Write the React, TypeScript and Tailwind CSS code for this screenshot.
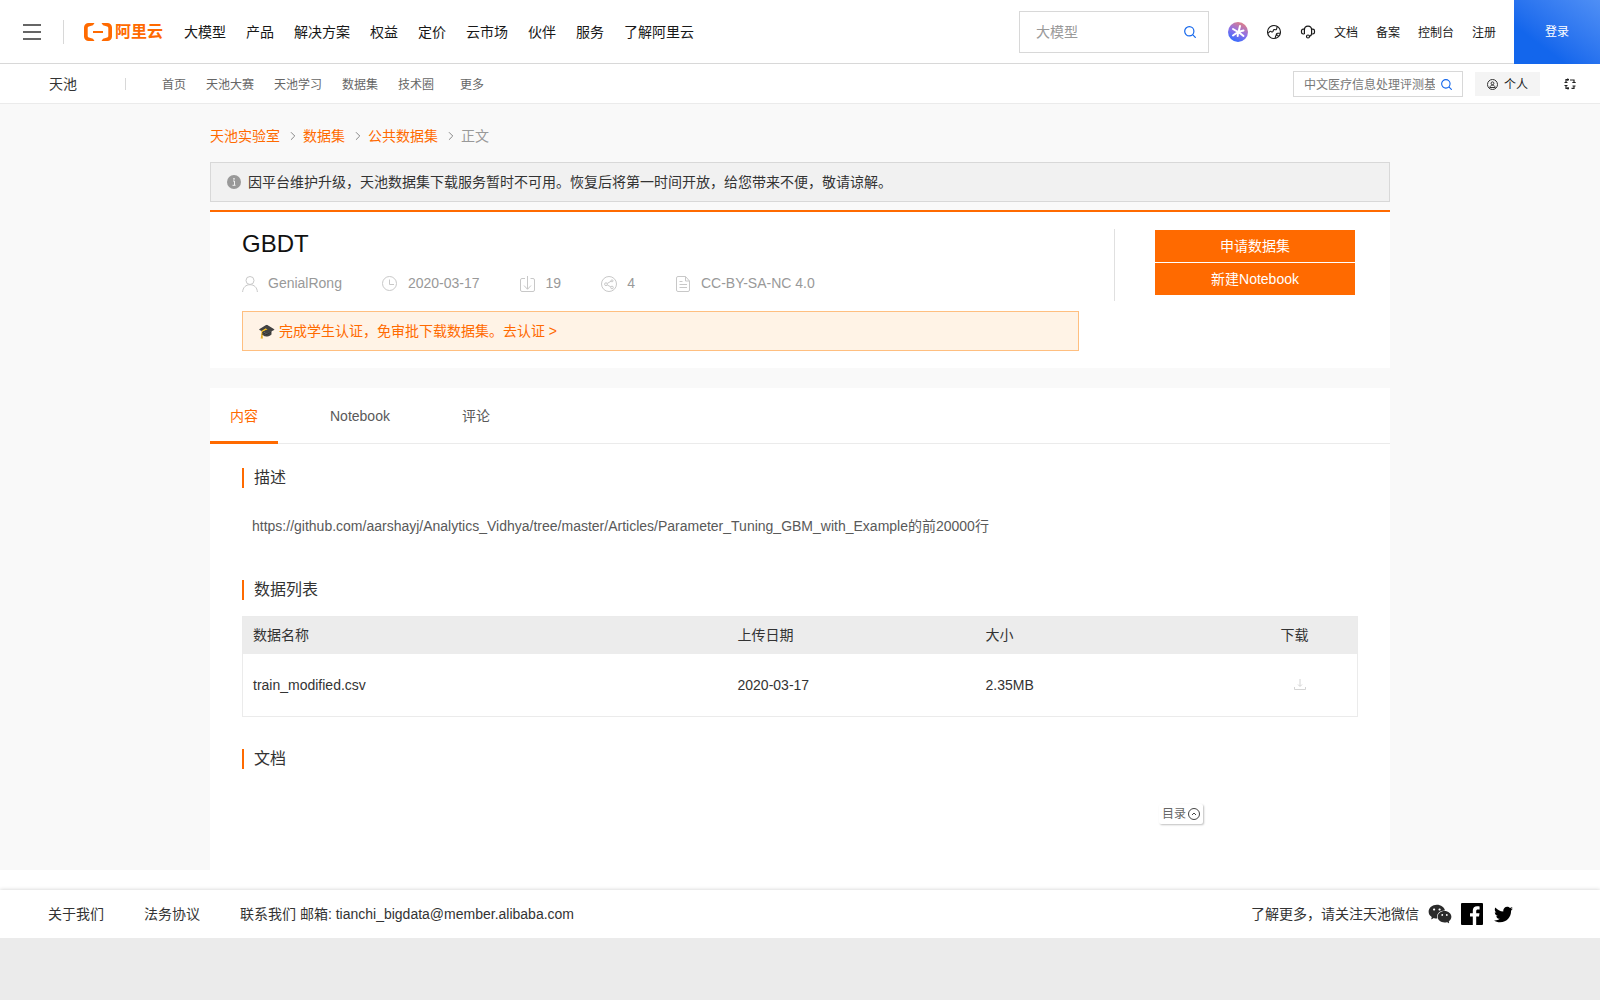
import { useState } from 'react'
import { ChevronRight } from 'lucide-react'
import { AiFillWechat } from 'react-icons/ai'
import { FaTwitter } from 'react-icons/fa'

const mainNav = ['大模型', '产品', '解决方案', '权益', '定价', '云市场', '伙伴', '服务', '了解阿里云']
const accountNav = ['文档', '备案', '控制台', '注册']
const subNav = ['首页', '天池大赛', '天池学习', '数据集', '技术圈']
const tabs = ['内容', 'Notebook', '评论']
const files = [{ name: 'train_modified.csv', date: '2020-03-17', size: '2.35MB' }]

function Logo() {
  return (
    <a href="#" aria-label="阿里云" className="flex items-center gap-[3px] text-[#ff6a00]">
      <svg width="28" height="18" viewBox="0 0 28 18" fill="none" stroke="currentColor">
        <path
          d="M10.500 0H4.600A4.600 4.600 0 0 0 0 4.600v8.800A4.600 4.600 0 0 0 4.600 18h5.900l-1.500-2.300-4.100-1.200a1.700 1.700 0 0 1-1.200-1.600V5.100c0-.8.500-1.400 1.200-1.600L9 2.300z"
          fill="currentColor"
          stroke="none"
        />
        <path
          d="M17.500 0h5.900A4.600 4.600 0 0 1 28 4.600v8.800a4.600 4.600 0 0 1-4.600 4.600h-5.900l1.500-2.300 4.100-1.200c.7-.2 1.200-.9 1.200-1.600V5.100c0-.8-.5-1.400-1.200-1.600L19 2.300z"
          fill="currentColor"
          stroke="none"
        />
        <path d="M9 9h10" strokeWidth="2" />
      </svg>
      <span className="text-base leading-5 font-bold">阿里云</span>
    </a>
  )
}

function SearchIcon({ size }: { size: number }) {
  return (
    <svg width={size} height={size} viewBox="0 0 12 12" fill="none" stroke="#1366ec" strokeWidth="1.200">
      <circle cx="5.300" cy="5.300" r="4.600" />
      <path d="M8.600 8.600 11.700 11.700" />
    </svg>
  )
}

function AssistantIcon() {
  return (
    <svg width="20" height="20" viewBox="0 0 20 20">
      <defs>
        <linearGradient id="assistant" x1="0.300" y1="1" x2="0.750" y2="0">
          <stop offset="0" stopColor="#2f6bff" />
          <stop offset="0.500" stopColor="#9170e6" />
          <stop offset="1" stopColor="#e5807f" />
        </linearGradient>
      </defs>
      <circle cx="10" cy="10" r="10" fill="url(#assistant)" />
      <g stroke="#fff" strokeWidth="2" strokeLinecap="round">
        <path d="M10.500 10 12 4M10 10 5 7M10 10l5.500-1.500M10 10l-5 3.500M10.500 10l5 4M10 10l-.3 4" />
      </g>
    </svg>
  )
}

function GlobeIcon() {
  return (
    <svg width="16" height="16" viewBox="-1 -1 16 16" fill="none" stroke="#181818" strokeWidth="1.100">
      <circle cx="7" cy="7" r="6.500" />
      <path d="M.8 8.200C2.300 7.600 2.400 6 3.600 6.300c1.100.3 1 1.200 2 .6s.3-2 1.500-2.300c1-.2 1.600.7 2.300-.2.600-.8.300-1.900 1-3.200M13.300 8.300h-2.600c-1.100 0-1.500.8-1.400 1.700M8.200 13.200c0-1.400.2-2.800 1.400-3.100 1.100-.3 1.700.4 1.400 1.300" />
    </svg>
  )
}

function HeadsetIcon() {
  return (
    <svg width="16" height="16" viewBox="-1 -1 16 16" fill="none" stroke="#181818" strokeWidth="1.200">
      <path d="M3.400 9V5C3.400 2.700 5 1.100 7 1.100S10.600 2.700 10.600 5v3.600c0 1.300-.8 2.300-2 2.700" />
      <path d="M3.400 4.200H2.200C1.200 4.200.5 5 .5 5.900v1.400c0 .9.700 1.700 1.700 1.700h1.200M10.600 4.200h1.200c1 0 1.700.8 1.700 1.700v1.400c0 .9-.7 1.700-1.700 1.700h-1.200" />
      <circle cx="7" cy="11.500" r="1.500" />
    </svg>
  )
}

function PersonalIcon() {
  return (
    <svg width="11" height="11" viewBox="0 0 11 11" fill="none" stroke="#333">
      <circle cx="5.500" cy="5.500" r="5" />
      <circle cx="5.500" cy="4.300" r="1.400" />
      <path d="M2.800 8.500c.3-1.600 1.300-2.300 2.700-2.300s2.400.7 2.700 2.300z" />
    </svg>
  )
}

function ExpandIcon() {
  return (
    <svg width="12" height="12" viewBox="0 0 12 12" fill="none" stroke="#222" strokeWidth="1.200">
      <path d="M2 4.500V1.600h3M6 2h4v2.500M10 8v2.400H7.500M5 10.400H2V7.500" />
      <path d="M.5 4.500h3M.5 7.500h3M8.300 4.500h3.400M8.500 8h3M3.700.5v2.200M4 9v2.500" />
    </svg>
  )
}

const metaSvg = { width: 16, height: 16, viewBox: '0 0 16 16', fill: 'none', stroke: '#c8c8c8' }

const meta = [
  {
    text: 'GenialRong',
    icon: (
      <svg {...metaSvg}>
        <circle cx="8" cy="4.500" r="4" />
        <path d="M.6 16C.9 11.500 3.800 8.700 8 8.700s7.100 2.800 7.400 7.300" />
      </svg>
    ),
  },
  {
    text: '2020-03-17',
    icon: (
      <svg {...metaSvg}>
        <circle cx="7.500" cy="7.500" r="7" />
        <path d="M7.500 3.500v5H12" />
      </svg>
    ),
  },
  {
    text: '19',
    icon: (
      <svg {...metaSvg}>
        <path d="M5 2.500H2A1.500 1.500 0 0 0 .5 4v10A1.500 1.500 0 0 0 2 15.500h11a1.500 1.500 0 0 0 1.500-1.500V4A1.500 1.500 0 0 0 13 2.500h-2.500M7.500 0v13M4 9.500l3.500 3.800L11 9.500" />
      </svg>
    ),
  },
  {
    text: '4',
    icon: (
      <svg {...metaSvg}>
        <circle cx="8" cy="8" r="7.500" />
        <circle cx="5" cy="8.200" r="1.400" />
        <circle cx="11" cy="4.800" r="1" />
        <circle cx="11" cy="11.500" r="1.300" />
        <path d="m6.300 7.400 3.800-2.200M6.300 9l3.600 1.900" />
      </svg>
    ),
  },
  {
    text: 'CC-BY-SA-NC 4.0',
    icon: (
      <svg {...metaSvg}>
        <path d="M10.500.5H3A1.500 1.500 0 0 0 1.500 2v12A1.500 1.500 0 0 0 3 15.500h10a1.500 1.500 0 0 0 1.500-1.500V5zM10.500.5V5h4M4.500 5.500h3M4.500 8.500h7.500M4.500 11.500h7.500" />
      </svg>
    ),
  },
]

function SectionTitle({ children }: { children: string }) {
  return <h2 className="border-l-2 border-[#ff6a00] pl-2.5 text-base leading-5 text-[#333]">{children}</h2>
}

export default function App() {
  const [activeTab, setActiveTab] = useState('内容')

  return (
    <div className="flex min-h-screen flex-col bg-white font-['Liberation_Sans','Noto_Sans_CJK_SC',sans-serif] text-sm text-[#333]">
      {/* Global header */}
      <header className="flex h-16 items-center">
        <div className="flex h-full flex-1 items-center border-b border-[#d8d8d8] pt-px pl-[23px]">
          <button aria-label="菜单" className="flex h-4 w-[18px] flex-col justify-between">
            <span className="h-0.5 w-full bg-[#666]" />
            <span className="h-0.5 w-full bg-[#666]" />
            <span className="h-0.5 w-full bg-[#666]" />
          </button>
          <div className="mr-5 ml-[22px] h-6 w-px bg-[#d8d8d8]" />
          <Logo />
          <nav className="ml-[21px] flex gap-5 whitespace-nowrap text-[#181818]">
            {mainNav.map((item) => (
              <a key={item} href="#">{item}</a>
            ))}
          </nav>
          <div className="ml-auto flex h-[42px] w-[190px] items-center border border-[#d8d8d8] pr-3 pl-4">
            <input
              aria-label="搜索"
              placeholder="大模型"
              className="min-w-0 flex-1 outline-none placeholder:text-[#999]"
            />
            <button aria-label="提交搜索"><SearchIcon size={12} /></button>
          </div>
          <div className="mr-[18px] ml-[19px] flex items-center gap-[18px] text-xs whitespace-nowrap text-[#181818]">
            <button aria-label="AI 助理"><AssistantIcon /></button>
            <button aria-label="语言"><GlobeIcon /></button>
            <button aria-label="联系我们"><HeadsetIcon /></button>
            {accountNav.map((item) => (
              <a key={item} href="#" className="pt-0.5">{item}</a>
            ))}
          </div>
        </div>
        <button className="h-full w-[86px] bg-linear-to-tr from-[#1366ec] from-30% to-[#4f8ff5] text-xs text-white">
          登录
        </button>
      </header>

      {/* Tianchi navigation */}
      <div className="flex h-10 items-center border-b border-[#ebebeb] pt-px pr-6 pl-[49px] text-xs whitespace-nowrap text-[#666]">
        <a href="#" className="text-sm text-[#333]">天池</a>
        <div className="mr-9 ml-12 h-3 w-px bg-[#d8d8d8]" />
        <nav className="flex gap-5 pt-0.5">
          {subNav.map((item) => (
            <a key={item} href="#">{item}</a>
          ))}
          <a href="#" className="ml-1.5">更多</a>
        </nav>
        <div className="ml-auto flex h-[26px] w-[170px] items-center gap-1.5 border border-[#d8d8d8] px-2.5">
          <input
            aria-label="搜索天池"
            placeholder="中文医疗信息处理评测基准"
            className="min-w-0 flex-1 pt-0.5 outline-none placeholder:text-[#777]"
          />
          <button aria-label="提交"><SearchIcon size={11} /></button>
        </div>
        <button className="ml-3 flex h-6 items-center gap-1.5 bg-[#f4f4f4] px-3 text-[#222]">
          <PersonalIcon />
          <span className="pt-0.5">个人</span>
        </button>
        <button aria-label="展开" className="ml-6"><ExpandIcon /></button>
      </div>

      {/* Dataset page */}
      <main className="bg-[#f9f9f9]">
        <div className="mx-auto max-w-[1180px]">
          <nav className="flex items-center pt-[22px] pb-4 leading-5 text-[#ff6a00]">
            <a href="#">天池实验室</a>
            <ChevronRight className="mr-[3px] ml-1.5 size-3.5 text-[#777]" strokeWidth={1.5} />
            <a href="#">数据集</a>
            <ChevronRight className="mr-[3px] ml-1.5 size-3.5 text-[#777]" strokeWidth={1.5} />
            <a href="#">公共数据集</a>
            <ChevronRight className="mr-[3px] ml-1.5 size-3.5 text-[#777]" strokeWidth={1.5} />
            <span className="text-[#999]">正文</span>
          </nav>

          <div className="mb-2 flex h-10 items-center gap-[7px] border border-[#d8d8d8] bg-[#f1f1f1] px-4">
            <svg width="14" height="14" viewBox="0 0 14 14">
              <circle cx="7" cy="7" r="7" fill="#999" />
              <path d="M6 6h1.500v4M5.500 10.300h3" stroke="#f1f1f1" fill="none" />
              <circle cx="7" cy="3.800" r="0.900" fill="#f1f1f1" />
            </svg>
            因平台维护升级，天池数据集下载服务暂时不可用。恢复后将第一时间开放，给您带来不便，敬请谅解。
          </div>

          <section className="flex items-start border-t-2 border-[#ff6a00] bg-white pr-[35px] pb-[17px] pl-8">
            <div className="flex-1 pt-4">
              <h1 className="text-2xl leading-8 text-[#111]">GBDT</h1>
              <ul className="mt-3 flex gap-10 leading-6 text-[#999]">
                {meta.map((item) => (
                  <li key={item.text} className="flex h-6 items-center gap-2.5">
                    {item.icon}
                    <span className="pb-0.5">{item.text}</span>
                  </li>
                ))}
              </ul>
              <a
                href="#"
                className="mt-[15px] flex h-10 items-center border border-[#ffbf80] bg-[#fff3e6] px-[15px] text-[#ff6a00]"
              >
                🎓 完成学生认证，免审批下载数据集。去认证 &gt;
              </a>
            </div>
            <div className="mt-[17px] ml-[35px] h-[72px] w-px bg-[#e0e0e0]" />
            <div className="mt-[18px] ml-10 flex w-[200px] flex-col gap-px text-white">
              <button className="h-8 bg-[#ff6a00]">申请数据集</button>
              <button className="h-8 bg-[#ff6a00]">新建Notebook</button>
            </div>
          </section>

          <section className="relative mt-5 bg-white pb-[101px]">
            <div role="tablist" className="flex h-14 gap-8 border-b border-[#ebebeb]">
              {tabs.map((tab) => (
                <button
                  key={tab}
                  role="tab"
                  aria-selected={tab === activeTab}
                  onClick={() => setActiveTab(tab)}
                  className={`-mb-px border-b-[3px] px-5 pt-0.5 ${
                    tab === activeTab ? 'border-[#ff6a00] text-[#ff6a00]' : 'border-transparent text-[#595959]'
                  }`}
                >
                  {tab}
                </button>
              ))}
            </div>

            <div className="px-8 pt-6">
              <SectionTitle>描述</SectionTitle>
              <p className="mt-7 mb-11 pl-2.5 leading-5 text-[#595959]">
                https://github.com/aarshayj/Analytics_Vidhya/tree/master/Articles/Parameter_Tuning_GBM_with_Example的前20000行
              </p>

              <SectionTitle>数据列表</SectionTitle>
              <table className="mt-4 mb-8 w-full table-fixed border border-[#ebebeb] text-left">
                <colgroup>
                  <col />
                  <col className="w-[248px]" />
                  <col className="w-[295px]" />
                  <col className="w-[87px]" />
                </colgroup>
                <thead className="bg-[#ececec]">
                  <tr className="h-[37px]">
                    <th className="px-2.5 font-normal">数据名称</th>
                    <th className="px-2.5 font-normal">上传日期</th>
                    <th className="px-2.5 font-normal">大小</th>
                    <th className="px-2.5 font-normal">下载</th>
                  </tr>
                </thead>
                <tbody>
                  {files.map((file) => (
                    <tr key={file.name} className="h-[63px]">
                      <td className="px-2.5">{file.name}</td>
                      <td className="px-2.5">{file.date}</td>
                      <td className="px-2.5">{file.size}</td>
                      <td className="pl-[22px]">
                        <button aria-label="下载" className="block">
                          <svg width="14" height="12" viewBox="0 0 14 12" fill="none" stroke="#d4d4d4">
                            <path d="M7 0v7M5 5.500l2 2 2-2M1.500 8v2.500h11V8" />
                          </svg>
                        </button>
                      </td>
                    </tr>
                  ))}
                </tbody>
              </table>

              <SectionTitle>文档</SectionTitle>
            </div>

            {/* Floating table of contents */}
            <button className="absolute right-[187px] bottom-[46px] flex h-5 items-center gap-0.5 rounded-xs bg-white px-[3px] text-xs text-[#666] shadow-[1px_1px_2px_rgba(0,0,0,0.25)]">
              目录
              <svg width="12" height="12" viewBox="0 0 12 12" fill="none" stroke="#444">
                <circle cx="6" cy="6" r="5.500" />
                <path d="M4 7l2-2 2 2" />
              </svg>
            </button>
          </section>
        </div>
      </main>

      {/* Footer */}
      <footer className="mt-5 flex h-12 items-center bg-white pr-[84px] pl-12 shadow-[0_0_4px_rgba(0,0,0,0.2)]">
        <div className="flex gap-10">
          <a href="#">关于我们</a>
          <a href="#">法务协议</a>
          <span>联系我们 邮箱: tianchi_bigdata@member.alibaba.com</span>
        </div>
        <div className="ml-auto flex items-center gap-2">
          <span>了解更多，请关注天池微信</span>
          <a href="#" aria-label="微信"><AiFillWechat size={26} color="#2b2b2b" /></a>
          <a href="#" aria-label="Facebook">
            <svg width="22" height="22" viewBox="0 0 22 22">
              <rect width="22" height="22" rx="1" fill="#000" />
              <path
                d="M15.200 22v-8.500h2.800l.5-3.300h-3.300V8.100c0-1 .4-1.600 1.700-1.600h1.700V3.500c-.4-.1-1.300-.2-2.500-.2-2.600 0-4.300 1.500-4.300 4.300v2.600H9v3.300h2.800V22z"
                fill="#fff"
              />
            </svg>
          </a>
          <a href="#" aria-label="Twitter" className="px-[3px]"><FaTwitter size={19} color="#000" /></a>
        </div>
      </footer>
      <div className="flex-1 bg-[#ebebeb]" />
    </div>
  )
}
